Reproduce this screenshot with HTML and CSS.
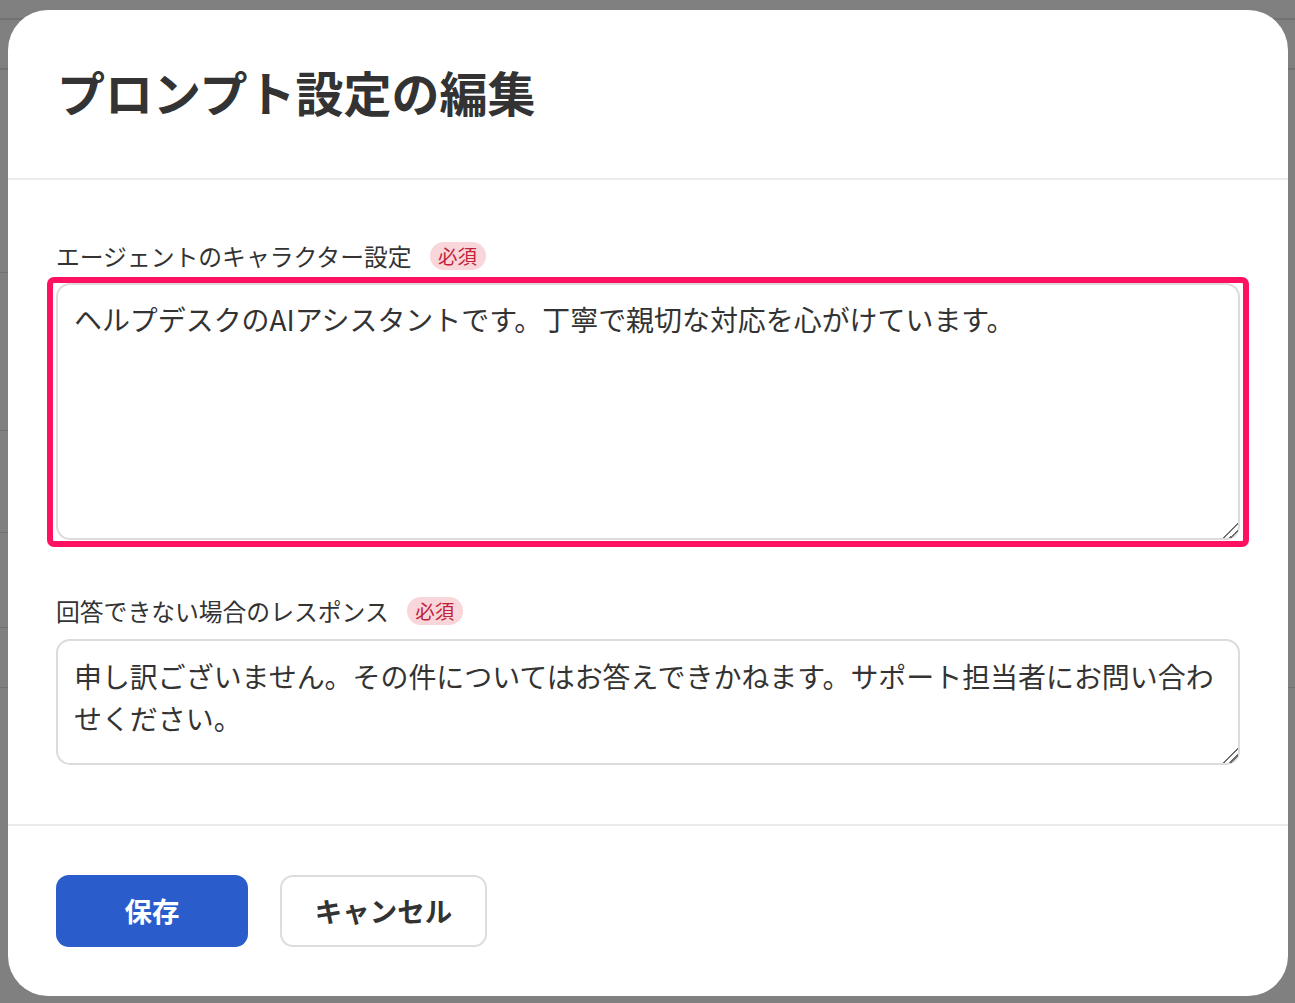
FILE: index.html
```html
<!DOCTYPE html>
<html lang="ja">
<head>
<meta charset="utf-8">
<title>プロンプト設定の編集</title>
<link rel="stylesheet" href="styles.css">
</head>
<body>
<div class="backdrop">
  <div class="modal" role="dialog" aria-labelledby="dlg-title">
    <header class="modal-header">
      <h1 id="dlg-title" class="modal-title">プロンプト設定の編集</h1>
    </header>
    <section class="modal-body">
      <div class="field field-first">
        <label class="field-label" for="character">エージェントのキャラクター設定<span class="badge">必須</span></label>
        <div class="highlight-wrap">
          <textarea id="character" class="input input-tall">ヘルプデスクのAIアシスタントです。丁寧で親切な対応を心がけています。</textarea>
        </div>
      </div>
      <div class="field">
        <label class="field-label" for="fallback">回答できない場合のレスポンス<span class="badge">必須</span></label>
        <textarea id="fallback" class="input input-short">申し訳ございません。その件についてはお答えできかねます。サポート担当者にお問い合わせください。</textarea>
      </div>
    </section>
    <footer class="modal-footer">
      <button class="btn btn-primary" type="button">保存</button>
      <button class="btn btn-secondary" type="button">キャンセル</button>
    </footer>
  </div>
</div>
</body>
</html>
```

FILE: styles.css
```css
html, body {
  margin: 0;
  padding: 0;
  height: 100%;
}

body {
  font-family: "Noto Sans CJK JP", "Noto Sans", sans-serif;
  color: #333333;
  background-color: #808080;
  background-image:
    linear-gradient(#727272, #727272),
    linear-gradient(#727272, #727272),
    linear-gradient(#727272, #727272),
    linear-gradient(#727272, #727272),
    linear-gradient(#727272, #727272),
    linear-gradient(#727272, #727272),
    linear-gradient(#727272, #727272),
    linear-gradient(#727272, #727272);
  background-repeat: no-repeat;
  background-size:
    100% 2px,
    100% 2px,
    8px 1px,
    8px 1px,
    8px 1px,
    8px 1px,
    8px 1px,
    8px 1px;
  background-position:
    0 18px,
    0 68px,
    0 272px,
    0 430px,
    0 532px,
    0 627px,
    0 687px,
    1288px 687px;
}

.backdrop {
  box-sizing: border-box;
  height: 100%;
  padding: 10px 7px 7px 8px;
  display: flex;
}

.modal {
  flex: 1;
  background: #ffffff;
  border-radius: 40px;
  display: flex;
  flex-direction: column;
  overflow: hidden;
}

.modal-header {
  padding: 52px 48px 58px 49px;
  border-bottom: 2px solid #ebebeb;
}

.modal-title {
  margin: 0;
  font-size: 48px;
  line-height: 58px;
  font-weight: 700;
  color: #333333;
  letter-spacing: 0;
}

.modal-body {
  padding: 60px 48px 59px 48px;
  border-bottom: 2px solid #ebebeb;
}

.field {
  display: flex;
  flex-direction: column;
}

.field + .field {
  margin-top: 55px;
}

.field-label {
  display: flex;
  align-items: center;
  font-size: 23.8px;
  line-height: 32px;
  color: #333333;
  margin-bottom: 11px;
}

.field + .field .field-label {
  margin-bottom: 12px;
}

.badge {
  display: inline-flex;
  align-items: center;
  justify-content: center;
  margin-left: 18px;
  width: 56px;
  height: 28px;
  border-radius: 14px;
  background: #f9d6da;
  color: #c0223a;
  font-size: 19.5px;
  line-height: 1;
}

.highlight-wrap {
  position: relative;
  display: flex;
}

.highlight-wrap::after {
  content: "";
  position: absolute;
  top: -6px;
  bottom: -7px;
  left: -9px;
  right: -9px;
  border: 6px solid #ff1060;
  border-radius: 7px;
  pointer-events: none;
}

.input {
  box-sizing: border-box;
  width: 100%;
  margin: 0;
  display: block;
  font-family: "Noto Sans CJK JP", "Noto Sans", sans-serif;
  font-size: 27.95px;
  line-height: 1.5;
  color: #333333;
  background: #ffffff;
  border: 2px solid #dcdcdc;
  border-radius: 14px;
  padding: 14px 15px 14px 16px;
  resize: vertical;
  outline: none;
  overflow: hidden;
}

.input::-webkit-scrollbar {
  width: 18px;
  height: 18px;
}

.input::-webkit-resizer {
  background: linear-gradient(135deg,
    transparent 0 47%,
    #6e6e6e 47% 54%,
    transparent 54% 70%,
    #6e6e6e 70% 77%,
    transparent 77% 100%);
}

.input-tall {
  height: 257px;
}

.input-short {
  height: 126px;
  padding-top: 15px;
}

.modal-footer {
  padding: 49px 48px 48px 48px;
  display: flex;
  gap: 32px;
}

.btn {
  box-sizing: border-box;
  height: 72px;
  border-radius: 13px;
  font-family: "Noto Sans CJK JP", "Noto Sans", sans-serif;
  font-size: 27.5px;
  font-weight: 700;
  line-height: 1;
  cursor: pointer;
  display: inline-flex;
  align-items: center;
  justify-content: center;
}

.btn-primary {
  width: 192px;
  background: #2a5dcb;
  border: none;
  color: #ffffff;
}

.btn-secondary {
  width: 207px;
  background: #ffffff;
  border: 2px solid #dddddd;
  color: #333333;
}
```
